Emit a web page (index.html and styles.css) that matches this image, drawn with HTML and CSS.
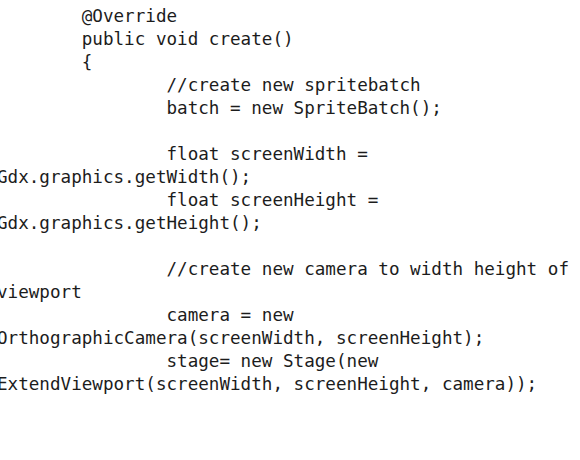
FILE: index.html
```html
<!DOCTYPE html>
<html>
<head>
<meta charset="utf-8">
<link rel="stylesheet" href="styles.css">
</head>
<body>
<pre class="code">        @Override
        public void create()
        {
                //create new spritebatch
                batch = new SpriteBatch();

                float screenWidth =
Gdx.graphics.getWidth();
                float screenHeight =
Gdx.graphics.getHeight();

                //create new camera to width height of
viewport
                camera = new
OrthographicCamera(screenWidth, screenHeight);
                stage= new Stage(new
ExtendViewport(screenWidth, screenHeight, camera));</pre>
</body>
</html>
```
FILE: styles.css
```css
html, body {
  margin: 0;
  padding: 0;
  background: #ffffff;
  overflow: hidden;
}
.code {
  margin: 5px 0 0 -3px;
  font-family: "DejaVu Sans Mono", "Liberation Mono", monospace;
  font-size: 17.6px;
  line-height: 23px;
  color: #1c1c1c;
  white-space: pre;
}
```
